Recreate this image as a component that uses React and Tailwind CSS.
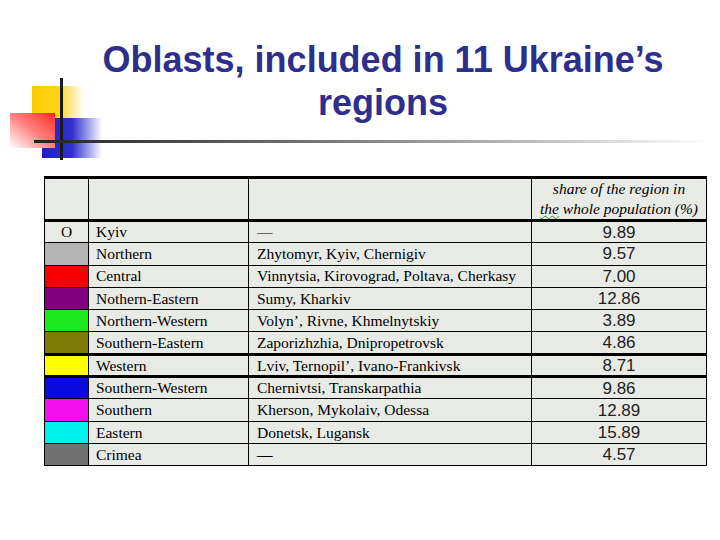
import React from "react";

const rows = [
  { sw: "bg-[#e8eae6]", mark: "O", name: "Kyiv", obl: "—", val: "9.89" },
  { sw: "bg-[#b4b4b4]", name: "Northern", obl: "Zhytomyr, Kyiv, Chernigiv", val: "9.57" },
  { sw: "bg-[#f80000]", name: "Central", obl: "Vinnytsia, Kirovograd, Poltava, Cherkasy", val: "7.00" },
  { sw: "bg-[#800080]", name: "Nothern-Eastern", obl: "Sumy, Kharkiv", val: "12.86" },
  { sw: "bg-[#1ee81e]", name: "Northern-Western", obl: "Volyn’, Rivne, Khmelnytskiy", val: "3.89" },
  { sw: "bg-[#7d7a05]", name: "Southern-Eastern", obl: "Zaporizhzhia, Dnipropetrovsk", val: "4.86", thick: true },
  { sw: "bg-[#ffff00]", name: "Western", obl: "Lviv, Ternopil’, Ivano-Frankivsk", val: "8.71", thick: true },
  { sw: "bg-[#0a0ae0]", name: "Southern-Western", obl: "Chernivtsi, Transkarpathia", val: "9.86" },
  { sw: "bg-[#f010f0]", name: "Southern", obl: "Kherson, Mykolaiv, Odessa", val: "12.89" },
  { sw: "bg-[#00f0f0]", name: "Eastern", obl: "Donetsk, Lugansk", val: "15.89" },
  { sw: "bg-[#727272]", name: "Crimea", obl: "—", val: "4.57", bold: true },
];

function Logo() {
  return (
    <div className="absolute left-0 top-0 w-[720px] h-[170px] pointer-events-none">
      <div className="absolute left-[32px] top-[86px] w-[52px] h-[33px] bg-gradient-to-r from-[#ffcc00] via-[#ffd21a] to-[#ffffff00]" />
      <div className="absolute left-[42px] top-[118px] w-[60px] h-[40px] bg-gradient-to-r from-[#2020c0] via-[#3030d0] to-[#ffffff00]" />
      <div className="absolute left-[10px] top-[113px] w-[45px] h-[35px] bg-gradient-to-bl from-[#ff1010] via-[#ff8080] to-[#ffffff]" />
      <div className="absolute left-[60px] top-[78px] w-[3px] h-[82px] bg-[#1a1a1a]" />
      <div className="absolute left-[34px] top-[140px] w-[680px] h-[3px] bg-gradient-to-r from-[#222] via-[#888] to-[#ffffff]" />
    </div>
  );
}

export default function App() {
  return (
    <div className="relative w-[720px] h-[540px] bg-white overflow-hidden">
      <Logo />
      <div className="relative flex flex-col">
        <div className="pl-[81px] pr-[35px] pt-[38px] text-center text-[#2e2e8c] font-bold text-[36px] leading-[43px] font-['Liberation_Sans',Arial,sans-serif] whitespace-nowrap">
          <div>Oblasts, included in 11 Ukraine’s</div>
          <div>regions</div>
        </div>
        <div className="pl-[44px] pt-[52px]">
          <table className="border-collapse font-['Liberation_Serif','Times_New_Roman',serif] text-[15.5px] text-black bg-[#e8eae6]">
            <colgroup>
              <col className="w-[44px]" />
              <col className="w-[160px]" />
              <col className="w-[283px]" />
              <col className="w-[175px]" />
            </colgroup>
            <thead>
              <tr className="h-[40px] border-t-[3px] border-b-[3px] border-black">
                <th className="border border-black border-t-[3px] border-b-[3px]"></th>
                <th className="border border-black border-t-[3px] border-b-[3px]"></th>
                <th className="border border-black border-t-[3px] border-b-[3px]"></th>
                <th className="border border-black border-t-[3px] border-b-[3px] font-normal italic text-[15.5px] leading-[20px] text-center">
                  <div>share of the region in</div>
                  <div>
                    <span className="underline decoration-wavy decoration-[#3a8a3a] decoration-1">the</span> whole population (%)
                  </div>
                </th>
              </tr>
            </thead>
            <tbody>
              {rows.map((r, i) => (
                <tr key={i} className={`h-[22.3px] ${r.thick ? "border-b-[3px] border-black" : ""}`}>
                  <td className={`border border-black ${r.sw} ${r.thick ? "border-b-[3px]" : ""} text-center leading-none`}>
                    {r.mark || ""}
                  </td>
                  <td className={`border border-black ${r.thick ? "border-b-[3px]" : ""} pl-[7px] leading-none`}>{r.name}</td>
                  <td className={`border border-black ${r.thick ? "border-b-[3px]" : ""} pl-[8px] leading-none ${r.bold ? "font-bold" : ""}`}>{r.obl}</td>
                  <td className={`border border-black ${r.thick ? "border-b-[3px]" : ""} text-center text-[17px] leading-none font-['Liberation_Sans_Narrow','Liberation_Sans',sans-serif] text-[#222]`}>{r.val}</td>
                </tr>
              ))}
            </tbody>
          </table>
        </div>
      </div>
    </div>
  );
}
